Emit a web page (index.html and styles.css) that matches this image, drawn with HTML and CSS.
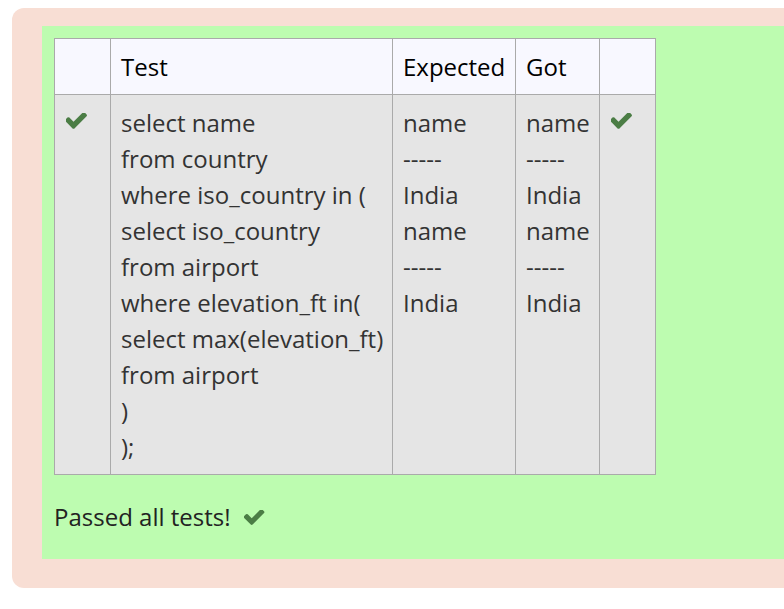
FILE: index.html
```html
<!DOCTYPE html>
<html>
<head>
<meta charset="utf-8">
<link rel="stylesheet" href="styles.css">
</head>
<body>
<div class="outcome">
  <div class="feedback">
    <table class="results">
      <thead>
        <tr>
          <th class="c-icon"></th>
          <th class="c-test">Test</th>
          <th class="c-exp">Expected</th>
          <th class="c-got">Got</th>
          <th class="c-icon"></th>
        </tr>
      </thead>
      <tbody>
        <tr>
          <td class="c-icon"><svg class="tick" viewBox="181 402 1490 1128"><path d="M1671 566q0 40-28 68l-724 724-136 136q-28 28-68 28t-68-28l-136-136-362-362q-28-28-28-68t28-68l136-136q28-28 68-28t68 28l294 295 656-657q28-28 68-28t68 28l136 136q28 28 28 68z"/></svg></td>
          <td class="c-test"><pre>select name
from country
where iso_country in (
select iso_country
from airport
where elevation_ft in(
select max(elevation_ft)
from airport
)
);</pre></td>
          <td class="c-exp"><pre>name
-----
India
name
-----
India</pre></td>
          <td class="c-got"><pre>name
-----
India
name
-----
India</pre></td>
          <td class="c-icon"><svg class="tick" viewBox="181 402 1490 1128"><path d="M1671 566q0 40-28 68l-724 724-136 136q-28 28-68 28t-68-28l-136-136-362-362q-28-28-28-68t28-68l136-136q28-28 68-28t68 28l294 295 656-657q28-28 68-28t68 28l136 136q28 28 28 68z"/></svg></td>
        </tr>
      </tbody>
    </table>
    <p class="passed">Passed all tests! <svg class="tick small" viewBox="181 402 1490 1128"><path d="M1671 566q0 40-28 68l-724 724-136 136q-28 28-68 28t-68-28l-136-136-362-362q-28-28-28-68t28-68l136-136q28-28 68-28t68 28l294 295 656-657q28-28 68-28t68 28l136 136q28 28 28 68z"/></svg></p>
  </div>
</div>
</body>
</html>
```
FILE: styles.css
```css
html, body {
  margin: 0;
  padding: 0;
  background: #ffffff;
  overflow: hidden;
}
body {
  font-family: "Open Sans", "Liberation Sans", sans-serif;
  font-size: 24px;
  line-height: 36px;
  color: #333333;
}
.outcome {
  margin: 8px 0 0 12px;
  height: 580px;
  background: #f8ded4;
  border-radius: 12px 0 0 12px;
  padding: 18px 0 0 30px;
  box-sizing: border-box;
}
.feedback {
  background: #bdfcb0;
  height: 533px;
  padding: 12px 0 0 12px;
  box-sizing: border-box;
}
.results {
  border-collapse: collapse;
  table-layout: fixed;
  width: 602px;
}
.results th, .results td {
  border: 1px solid #aaaaaa;
  padding: 10px 10px 9px 10px;
  vertical-align: top;
  text-align: left;
  overflow: visible;
  white-space: nowrap;
}
.results th {
  background: #f8f8ff;
  color: #000000;
  font-weight: normal;
  height: 36px;
}
.results td {
  background: #e5e5e5;
}
.results pre {
  margin: 0;
  font-family: inherit;
  font-size: inherit;
  line-height: inherit;
  color: #333333;
}
.c-icon { width: 35px; }
.c-test { width: 261px; }
.c-exp { width: 102px; }
.c-got { width: 63px; }
.tick {
  width: 21px;
  height: 16px;
  fill: #4b7d45;
  display: block;
  margin: 8px 0 0 1px;
}
.passed {
  margin: 24px 0 0 0;
  color: #222222;
  display: flex;
  align-items: center;
}
.tick.small {
  display: inline-block;
  width: 21px;
  height: 15px;
  margin: 0 0 0 13px;
}
```
